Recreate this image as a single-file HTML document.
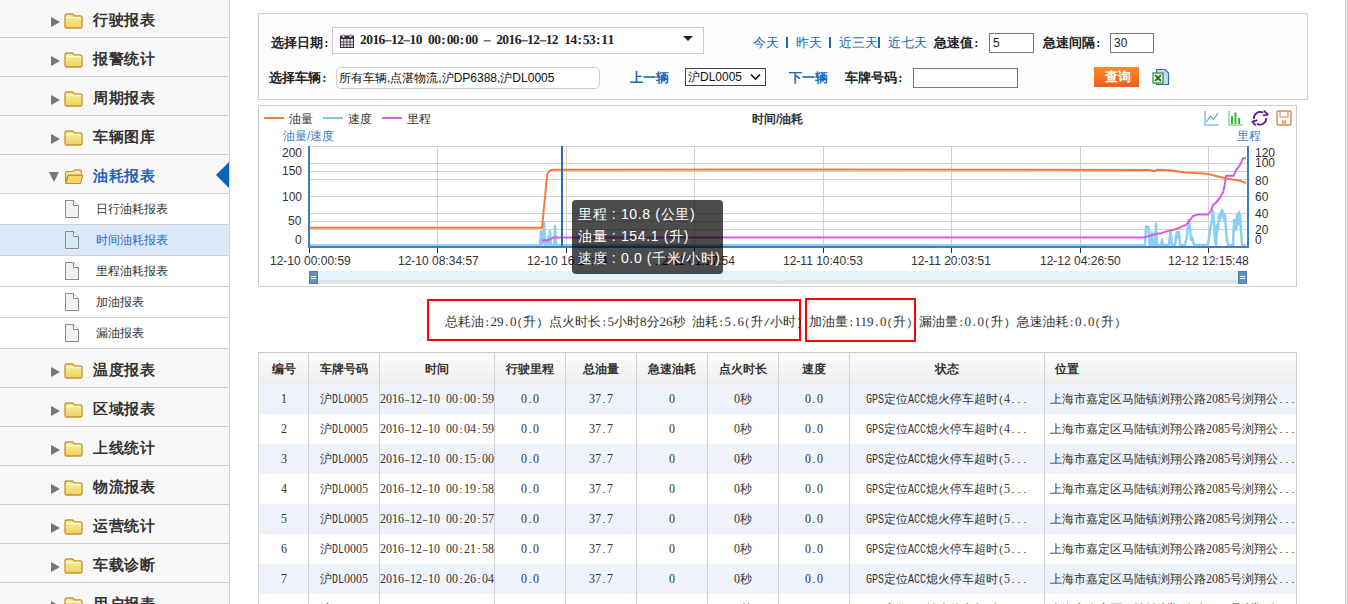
<!DOCTYPE html>
<html><head><meta charset="utf-8">
<style>
@font-face{font-family:"SM";src:local("Liberation Mono");size-adjust:83.33%;unicode-range:U+0000-002F,U+003A-00FF,U+2013;font-weight:normal;}
@font-face{font-family:"SM";src:local("Liberation Serif"),local("LiberationSerif");unicode-range:U+0030-0039;font-weight:normal;}
@font-face{font-family:"SM";src:local("Liberation Mono Bold"),local("LiberationMono-Bold");size-adjust:83.33%;unicode-range:U+0000-002F,U+003A-00FF;font-weight:bold;}
@font-face{font-family:"SM";src:local("Liberation Serif Bold"),local("LiberationSerif-Bold");unicode-range:U+0030-0039;font-weight:bold;}
html,body{margin:0;padding:0;}
body{width:1348px;height:604px;overflow:hidden;background:#fff;position:relative;font-family:"Liberation Sans",sans-serif;color:#333;}
.a{position:absolute;white-space:nowrap;}
.sm{font-family:"SM","Liberation Sans",sans-serif;}
/* sidebar */
#sb{position:absolute;left:0;top:0;width:229px;height:604px;background:#f8f8f8;border-right:1px solid #d4d4d4;overflow:hidden;}
.mr{position:absolute;left:0;width:229px;height:38px;border-bottom:1px solid #cecece;}
.mr .tri{position:absolute;left:51px;top:18px;width:0;height:0;border-top:5px solid transparent;border-bottom:5px solid transparent;border-left:9.5px solid #767676;}
.mr .fd{position:absolute;left:64px;top:14px;}
.mr .tx{position:absolute;left:93px;top:11px;letter-spacing:0.5px;font-size:15px;font-weight:bold;color:#333;line-height:20px;}
.sr{position:absolute;left:0;width:229px;height:30px;border-bottom:1px solid #cecece;background:#fff;}
.sr .dc{position:absolute;left:64px;top:5px;}
.sr .tx{position:absolute;left:96px;top:7px;font-size:12px;color:#333;line-height:17px;}
.mr .trd{position:absolute;left:49px;top:17px;width:0;height:0;border-left:5.5px solid transparent;border-right:5.5px solid transparent;border-top:10px solid #767676;}
.sel{position:absolute;left:216px;top:7px;width:0;height:0;border-top:13px solid transparent;border-bottom:13px solid transparent;border-right:13px solid #0b62b8;}

#tp{position:absolute;left:258px;top:13px;width:1048px;height:85px;border:1px solid #cdcdcd;background:#fdfdfd;}
.lb{font-size:13px;font-weight:bold;color:#222;line-height:16px;font-family:"SM","Liberation Sans",sans-serif;}
.lk{font-size:13px;color:#1a68b8;line-height:16px;}
.bx{position:absolute;background:#fff;box-sizing:border-box;}

#cp{position:absolute;left:258px;top:105px;width:1037px;height:180px;border:1px solid #cdcdcd;background:#fff;}
.ct{font-size:12px;color:#333;line-height:15px;}
.tt{font-size:14px;color:#fff;line-height:22px;letter-spacing:0.65px;}

.sum{font-size:13px;color:#333;line-height:16px;text-rendering:geometricPrecision;}
#tb{position:absolute;left:258px;top:352px;border-collapse:collapse;table-layout:fixed;font-size:12px;color:#333;}
#tb td,#tb th{padding:0;white-space:nowrap;overflow:hidden;text-align:center;border-left:1px solid #d2d2d2;border-right:1px solid #d2d2d2;}
#tb th{height:31px;font-weight:bold;background:linear-gradient(#fdfdfd,#ececec);border-top:1px solid #cfcfcf;line-height:16px;}
#tb td{height:30px;line-height:16px;padding-top:3px;box-sizing:border-box;}
#tb tr.o td{background:#eef3fb;}
#tb tr.e td{background:#fff;}
.dt{font-family:"Liberation Serif",serif;font-weight:bold;font-size:13.5px;color:#222;line-height:16px;text-rendering:geometricPrecision;}
.dt i{font-style:normal;display:inline-block;width:6.2px;text-align:center;}
.uc{display:inline-block;font-weight:normal;overflow:visible;vertical-align:baseline;}
.uc b{display:inline-block;font-weight:normal;font-family:"Liberation Mono",monospace;font-size:12.5px;transform:scaleX(0.8);transform-origin:0 0;}
</style></head><body>
<svg width="0" height="0" style="position:absolute"><defs><linearGradient id="fg" x1="0" y1="0" x2="0" y2="1"><stop offset="0" stop-color="#f6eea0"/><stop offset="0.45" stop-color="#f3e583"/><stop offset="1" stop-color="#f4cf5e"/></linearGradient><linearGradient id="fg2" x1="0" y1="0" x2="0" y2="1"><stop offset="0" stop-color="#f6ee9a"/><stop offset="1" stop-color="#f2cf5a"/></linearGradient></defs></svg>
<div id="sb">
<div class="mr" style="top:-1px"><span class="tri"></span><svg class="fd" width="19" height="16" viewBox="0 0 19 16"><path d="M1 3.2 Q1 1 3 1 L8.5 1 L10.3 2.8 L16 2.8 Q18 2.8 18 4.8 L18 13.5 Q18 15 16.5 15 L2.5 15 Q1 15 1 13.5 Z" fill="url(#fg)" stroke="#c79331" stroke-width="1.3"/><path d="M2.2 4.6 H16.8" stroke="#fffbe0" stroke-width="1.2"/></svg><span class="tx">行驶报表</span></div>
<div class="mr" style="top:38px"><span class="tri"></span><svg class="fd" width="19" height="16" viewBox="0 0 19 16"><path d="M1 3.2 Q1 1 3 1 L8.5 1 L10.3 2.8 L16 2.8 Q18 2.8 18 4.8 L18 13.5 Q18 15 16.5 15 L2.5 15 Q1 15 1 13.5 Z" fill="url(#fg)" stroke="#c79331" stroke-width="1.3"/><path d="M2.2 4.6 H16.8" stroke="#fffbe0" stroke-width="1.2"/></svg><span class="tx">报警统计</span></div>
<div class="mr" style="top:77px"><span class="tri"></span><svg class="fd" width="19" height="16" viewBox="0 0 19 16"><path d="M1 3.2 Q1 1 3 1 L8.5 1 L10.3 2.8 L16 2.8 Q18 2.8 18 4.8 L18 13.5 Q18 15 16.5 15 L2.5 15 Q1 15 1 13.5 Z" fill="url(#fg)" stroke="#c79331" stroke-width="1.3"/><path d="M2.2 4.6 H16.8" stroke="#fffbe0" stroke-width="1.2"/></svg><span class="tx">周期报表</span></div>
<div class="mr" style="top:116px"><span class="tri"></span><svg class="fd" width="19" height="16" viewBox="0 0 19 16"><path d="M1 3.2 Q1 1 3 1 L8.5 1 L10.3 2.8 L16 2.8 Q18 2.8 18 4.8 L18 13.5 Q18 15 16.5 15 L2.5 15 Q1 15 1 13.5 Z" fill="url(#fg)" stroke="#c79331" stroke-width="1.3"/><path d="M2.2 4.6 H16.8" stroke="#fffbe0" stroke-width="1.2"/></svg><span class="tx">车辆图库</span></div>
<div class="mr" style="top:155px"><span class="trd"></span><svg class="fd" style="top:14px" width="20" height="16" viewBox="0 0 20 16"><path d="M1.5 4 Q1.5 2.5 3 2.5 L9 2.5 L11 0.8 L16 0.8 L17.5 2.5 L17.5 6 L4 6 L1.5 13.5 Z" fill="#f3e7a8" stroke="#c9962c" stroke-width="1.2"/><path d="M4 6.5 L18.8 6.5 L16.5 14.5 L1.8 14.5 Z" fill="#f5d86a" stroke="#c9962c" stroke-width="1.2"/></svg><span class="tx" style="color:#1f64b4">油耗报表</span><span class="sel"></span></div>
<div class="sr" style="top:194px;"><svg class="dc" width="16" height="20" viewBox="0 0 16 20"><path d="M1.5 1.5 L9.5 1.5 L14.5 6.5 L14.5 18.5 L1.5 18.5 Z" fill="#f2f2f2" stroke="#8a8a8a" stroke-width="1"/><path d="M9.5 1.5 L9.5 6.5 L14.5 6.5" fill="#fff" stroke="#8a8a8a" stroke-width="1"/></svg><span class="tx">日行油耗报表</span></div>
<div class="sr" style="top:225px;background:#dae8f7;"><svg class="dc" width="16" height="20" viewBox="0 0 16 20"><path d="M1.5 1.5 L9.5 1.5 L14.5 6.5 L14.5 18.5 L1.5 18.5 Z" fill="#d6e8fb" stroke="#8a8a8a" stroke-width="1"/><path d="M9.5 1.5 L9.5 6.5 L14.5 6.5" fill="#fff" stroke="#8a8a8a" stroke-width="1"/></svg><span class="tx" style="color:#2e6cc0">时间油耗报表</span></div>
<div class="sr" style="top:256px;"><svg class="dc" width="16" height="20" viewBox="0 0 16 20"><path d="M1.5 1.5 L9.5 1.5 L14.5 6.5 L14.5 18.5 L1.5 18.5 Z" fill="#f2f2f2" stroke="#8a8a8a" stroke-width="1"/><path d="M9.5 1.5 L9.5 6.5 L14.5 6.5" fill="#fff" stroke="#8a8a8a" stroke-width="1"/></svg><span class="tx">里程油耗报表</span></div>
<div class="sr" style="top:287px;"><svg class="dc" width="16" height="20" viewBox="0 0 16 20"><path d="M1.5 1.5 L9.5 1.5 L14.5 6.5 L14.5 18.5 L1.5 18.5 Z" fill="#f2f2f2" stroke="#8a8a8a" stroke-width="1"/><path d="M9.5 1.5 L9.5 6.5 L14.5 6.5" fill="#fff" stroke="#8a8a8a" stroke-width="1"/></svg><span class="tx">加油报表</span></div>
<div class="sr" style="top:318px;"><svg class="dc" width="16" height="20" viewBox="0 0 16 20"><path d="M1.5 1.5 L9.5 1.5 L14.5 6.5 L14.5 18.5 L1.5 18.5 Z" fill="#f2f2f2" stroke="#8a8a8a" stroke-width="1"/><path d="M9.5 1.5 L9.5 6.5 L14.5 6.5" fill="#fff" stroke="#8a8a8a" stroke-width="1"/></svg><span class="tx">漏油报表</span></div>
<div class="mr" style="top:349px"><span class="tri"></span><svg class="fd" width="19" height="16" viewBox="0 0 19 16"><path d="M1 3.2 Q1 1 3 1 L8.5 1 L10.3 2.8 L16 2.8 Q18 2.8 18 4.8 L18 13.5 Q18 15 16.5 15 L2.5 15 Q1 15 1 13.5 Z" fill="url(#fg)" stroke="#c79331" stroke-width="1.3"/><path d="M2.2 4.6 H16.8" stroke="#fffbe0" stroke-width="1.2"/></svg><span class="tx">温度报表</span></div>
<div class="mr" style="top:388px"><span class="tri"></span><svg class="fd" width="19" height="16" viewBox="0 0 19 16"><path d="M1 3.2 Q1 1 3 1 L8.5 1 L10.3 2.8 L16 2.8 Q18 2.8 18 4.8 L18 13.5 Q18 15 16.5 15 L2.5 15 Q1 15 1 13.5 Z" fill="url(#fg)" stroke="#c79331" stroke-width="1.3"/><path d="M2.2 4.6 H16.8" stroke="#fffbe0" stroke-width="1.2"/></svg><span class="tx">区域报表</span></div>
<div class="mr" style="top:427px"><span class="tri"></span><svg class="fd" width="19" height="16" viewBox="0 0 19 16"><path d="M1 3.2 Q1 1 3 1 L8.5 1 L10.3 2.8 L16 2.8 Q18 2.8 18 4.8 L18 13.5 Q18 15 16.5 15 L2.5 15 Q1 15 1 13.5 Z" fill="url(#fg)" stroke="#c79331" stroke-width="1.3"/><path d="M2.2 4.6 H16.8" stroke="#fffbe0" stroke-width="1.2"/></svg><span class="tx">上线统计</span></div>
<div class="mr" style="top:466px"><span class="tri"></span><svg class="fd" width="19" height="16" viewBox="0 0 19 16"><path d="M1 3.2 Q1 1 3 1 L8.5 1 L10.3 2.8 L16 2.8 Q18 2.8 18 4.8 L18 13.5 Q18 15 16.5 15 L2.5 15 Q1 15 1 13.5 Z" fill="url(#fg)" stroke="#c79331" stroke-width="1.3"/><path d="M2.2 4.6 H16.8" stroke="#fffbe0" stroke-width="1.2"/></svg><span class="tx">物流报表</span></div>
<div class="mr" style="top:505px"><span class="tri"></span><svg class="fd" width="19" height="16" viewBox="0 0 19 16"><path d="M1 3.2 Q1 1 3 1 L8.5 1 L10.3 2.8 L16 2.8 Q18 2.8 18 4.8 L18 13.5 Q18 15 16.5 15 L2.5 15 Q1 15 1 13.5 Z" fill="url(#fg)" stroke="#c79331" stroke-width="1.3"/><path d="M2.2 4.6 H16.8" stroke="#fffbe0" stroke-width="1.2"/></svg><span class="tx">运营统计</span></div>
<div class="mr" style="top:544px"><span class="tri"></span><svg class="fd" width="19" height="16" viewBox="0 0 19 16"><path d="M1 3.2 Q1 1 3 1 L8.5 1 L10.3 2.8 L16 2.8 Q18 2.8 18 4.8 L18 13.5 Q18 15 16.5 15 L2.5 15 Q1 15 1 13.5 Z" fill="url(#fg)" stroke="#c79331" stroke-width="1.3"/><path d="M2.2 4.6 H16.8" stroke="#fffbe0" stroke-width="1.2"/></svg><span class="tx">车载诊断</span></div>
<div class="mr" style="top:583px"><span class="tri"></span><svg class="fd" width="19" height="16" viewBox="0 0 19 16"><path d="M1 3.2 Q1 1 3 1 L8.5 1 L10.3 2.8 L16 2.8 Q18 2.8 18 4.8 L18 13.5 Q18 15 16.5 15 L2.5 15 Q1 15 1 13.5 Z" fill="url(#fg)" stroke="#c79331" stroke-width="1.3"/><path d="M2.2 4.6 H16.8" stroke="#fffbe0" stroke-width="1.2"/></svg><span class="tx">用户报表</span></div>
</div>

<div id="tp"></div>
<span class="a lb" style="left:271px;top:36px">选择日期:</span>
<div class="bx" style="left:332px;top:27px;width:372px;height:27px;border:1px solid #c9c9c9"></div>
<svg class="a" style="left:340px;top:34px" width="14" height="14" viewBox="0 0 14 14"><rect x="0.5" y="2" width="13" height="11.5" fill="#e8e4f8" stroke="#3a3030" stroke-width="1"/><rect x="0.5" y="2" width="13" height="3" fill="#3a3030"/><path d="M0.5 8H13.5M0.5 10.8H13.5M3.7 5V13.5M6.9 5V13.5M10.1 5V13.5" stroke="#3a3030" stroke-width="0.8"/><circle cx="3.5" cy="2.3" r="1.4" fill="#fff" stroke="#3a3030" stroke-width="0.7"/><circle cx="10.5" cy="2.3" r="1.4" fill="#fff" stroke="#3a3030" stroke-width="0.7"/></svg>
<span class="a dt" style="left:360px;top:32px"><i>2</i><i>0</i><i>1</i><i>6</i><i>–</i><i>1</i><i>2</i><i>–</i><i>1</i><i>0</i><i>&nbsp;</i><i>0</i><i>0</i><i>:</i><i>0</i><i>0</i><i>:</i><i>0</i><i>0</i><i>&nbsp;</i><i>–</i><i>&nbsp;</i><i>2</i><i>0</i><i>1</i><i>6</i><i>–</i><i>1</i><i>2</i><i>–</i><i>1</i><i>2</i><i>&nbsp;</i><i>1</i><i>4</i><i>:</i><i>5</i><i>3</i><i>:</i><i>1</i><i>1</i></span>
<span class="a" style="left:683px;top:36px;width:0;height:0;border-left:5px solid transparent;border-right:5px solid transparent;border-top:5px solid #222"></span>
<span class="a lk" style="left:753px;top:35px">今天</span>
<span class="a" style="left:786px;top:37px;width:1.5px;height:11px;background:#1a68b8"></span>
<span class="a lk" style="left:796px;top:35px">昨天</span>
<span class="a" style="left:829px;top:37px;width:1.5px;height:11px;background:#1a68b8"></span>
<span class="a lk" style="left:839px;top:35px">近三天</span>
<span class="a" style="left:878px;top:37px;width:1.5px;height:11px;background:#1a68b8"></span>
<span class="a lk" style="left:888px;top:35px">近七天</span>
<span class="a lb" style="left:934px;top:36px">急速值:</span>
<div class="bx" style="left:989px;top:33px;width:45px;height:20px;border:1px solid #777"></div>
<span class="a" style="left:993px;top:35px;font-size:12px;color:#222;line-height:16px">5</span>
<span class="a lb" style="left:1043px;top:36px">急速间隔:</span>
<div class="bx" style="left:1110px;top:33px;width:44px;height:20px;border:1px solid #777"></div>
<span class="a" style="left:1114px;top:35px;font-size:12px;color:#222;line-height:16px">30</span>

<span class="a lb" style="left:269px;top:71px">选择车辆:</span>
<div class="bx" style="left:336px;top:67px;width:264px;height:22px;border:1px solid #ccc;border-radius:5px"></div>
<span class="a" style="left:339px;top:70px;font-size:12px;color:#111;line-height:16px">所有车辆,点湛物流,沪DP6388,沪DL0005</span>
<span class="a lk" style="left:630px;top:70px;font-weight:bold">上一辆</span>
<div class="bx" style="left:685px;top:68px;width:81px;height:18px;border:1px solid #444"></div>
<span class="a" style="left:688px;top:69px;font-size:12px;color:#111;line-height:16px">沪DL0005</span>
<svg class="a" style="left:750px;top:73px" width="11" height="8" viewBox="0 0 11 8"><path d="M1 1.5 L5.5 6 L10 1.5" fill="none" stroke="#111" stroke-width="1.6"/></svg>
<span class="a lk" style="left:789px;top:70px;font-weight:bold">下一辆</span>
<span class="a lb" style="left:845px;top:71px">车牌号码:</span>
<div class="bx" style="left:913px;top:68px;width:105px;height:20px;border:1px solid #777"></div>
<div class="a" style="left:1094px;top:67px;width:45px;height:20px;background:linear-gradient(#f68d25,#ed5d24);"></div>
<span class="a" style="left:1105px;top:69px;font-size:13px;font-weight:bold;color:#fff;line-height:16px">查询</span>
<svg class="a" style="left:1152px;top:68px" width="19" height="18" viewBox="0 0 19 18"><path d="M4.5 1.5 L13 1.5 L16.5 5 L16.5 16.5 L4.5 16.5 Z" fill="#c9dcf4" stroke="#3d63b0" stroke-width="1.2"/><rect x="1" y="5" width="10" height="10" fill="#fff" stroke="#2d8a2d" stroke-width="1.2"/><path d="M3 7 L9 13 M9 7 L3 13" stroke="#1f7a1f" stroke-width="2"/></svg>
<div id="cp"></div>
<svg class="a" style="left:0;top:0" width="1348" height="604" viewBox="0 0 1348 604">
<path d="M309 146.5H1247" stroke="#d2d2d2" stroke-width="1"/>
<path d="M309 163.5H1247" stroke="#d2d2d2" stroke-width="1"/>
<path d="M309 171.5H1247" stroke="#d2d2d2" stroke-width="1"/>
<path d="M309 179.5H1247" stroke="#d2d2d2" stroke-width="1"/>
<path d="M309 196.5H1247" stroke="#d2d2d2" stroke-width="1"/>
<path d="M309 213.5H1247" stroke="#d2d2d2" stroke-width="1"/>
<path d="M309 221.5H1247" stroke="#d2d2d2" stroke-width="1"/>
<path d="M309 229.5H1247" stroke="#d2d2d2" stroke-width="1"/>
<path d="M437.5 146V246" stroke="#d0d0d0" stroke-width="1"/>
<path d="M566.5 146V246" stroke="#d0d0d0" stroke-width="1"/>
<path d="M694.5 146V246" stroke="#d0d0d0" stroke-width="1"/>
<path d="M823.5 146V246" stroke="#d0d0d0" stroke-width="1"/>
<path d="M951.5 146V246" stroke="#d0d0d0" stroke-width="1"/>
<path d="M1080.5 146V246" stroke="#d0d0d0" stroke-width="1"/>
<path d="M1208.5 146V246" stroke="#d0d0d0" stroke-width="1"/>
<path d="M309.5 248V253" stroke="#333" stroke-width="1"/>
<path d="M437.5 248V253" stroke="#333" stroke-width="1"/>
<path d="M566.5 248V253" stroke="#333" stroke-width="1"/>
<path d="M694.5 248V253" stroke="#333" stroke-width="1"/>
<path d="M823.5 248V253" stroke="#333" stroke-width="1"/>
<path d="M951.5 248V253" stroke="#333" stroke-width="1"/>
<path d="M1080.5 248V253" stroke="#333" stroke-width="1"/>
<path d="M1208.5 248V253" stroke="#333" stroke-width="1"/>
<path d="M264 118H284" stroke="#f4793f" stroke-width="2"/>
<path d="M323 118H343" stroke="#7fc6f2" stroke-width="2"/>
<path d="M382 118H402" stroke="#d45fd8" stroke-width="2"/>
<polyline points="309,245.5 540,245.5 541,231.5 542,245 543,240 544,223 545,245 547,245 548,237 549,245 550,231 551,245 554,245 555,226 556,245 1145,245.5 1146,226.5 1148.5,227 1149.5,245 1151,245 1152,232.3 1153,245 1155,245 1156,223.7 1157,245 1161,245 1162,239.6 1163,245 1169,245 1170.5,231 1172,245 1175,245 1176,236 1177,232.3 1178,238 1179,232.3 1180,245 1185,245 1187,236 1188.5,220 1190,227 1191,240 1192,237 1194,245 1208,245 1210,230 1212,220 1213,211 1214,222 1215,240 1216,245 1217,225 1218,230 1219,215 1220,220 1221,212 1222,210 1223,213 1224,220 1225,215 1226,230 1227,240 1228,245 1233,245 1234,220 1235,222 1236,230 1237,215 1238,225 1239,212 1240,215 1241,230 1242,245 1246,245.5" fill="none" stroke="#8ccdf5" stroke-width="2.5" stroke-linejoin="round"/>
<polyline points="542,240.5 549,240 553,237.6 1144,237.4 1150,235.6 1155,234.2 1162,232.9 1170,230.4 1175,229.4 1180,227.5 1185,225.2 1188,223 1190,220 1193,216 1198,214.4 1208,214.4 1210.7,211.3 1213.2,204.6 1215.7,203 1219.8,198 1223.1,192.2 1224.8,184.8 1226.1,175.7 1233.9,175.7 1235.6,170.7 1239.7,165.7 1243,158.3 1246,158.3" fill="none" stroke="#d75cdb" stroke-width="2" stroke-linejoin="round"/>
<polyline points="309,227.7 542,227.7 547.3,174 550,170.5 553.3,169.7 800,169.5 1150,170 1153.5,171.2 1158,169.8 1170,170.3 1185,172.4 1203,173.5 1208,174 1225,178.2 1240,180.7 1246,183.2" fill="none" stroke="#f5793f" stroke-width="2" stroke-linejoin="round"/>
<path d="M309 146V248" stroke="#3d80c0" stroke-width="2"/>
<path d="M1248 146V248" stroke="#3d80c0" stroke-width="2"/>
<path d="M308 247H1249" stroke="#3d80c0" stroke-width="2"/>
<path d="M562 146V246" stroke="#2c6cae" stroke-width="2"/>
<rect x="309" y="271" width="938" height="9" fill="#e8f1fa"/><rect x="309" y="280" width="938" height="4" fill="#dbe5ef"/><path d="M775.5 276.5h1M778.5 276.5h1M781.5 276.5h1M775.5 280.5h1M778.5 280.5h1M781.5 280.5h1" stroke="#fff" stroke-width="1.2"/>
<rect x="309.5" y="271.5" width="8" height="12" fill="#5f90c3" stroke="#4a7db3" stroke-width="1"/>
<path d="M311 276.5H316M311 278.5H316" stroke="#fff" stroke-width="1"/>
<rect x="1238.5" y="271.5" width="8" height="12" fill="#5f90c3" stroke="#4a7db3" stroke-width="1"/>
<path d="M1240 276.5H1245M1240 278.5H1245" stroke="#fff" stroke-width="1"/>
<path d="M1205 111V125H1219" fill="none" stroke="#8cc3f5" stroke-width="1.6"/><path d="M1206.5 122L1210.5 116L1213.5 119.5L1218 113" fill="none" stroke="#5aa8ef" stroke-width="1.2"/>
<path d="M1229 111V125H1243" fill="none" stroke="#8fdc8f" stroke-width="1.6"/><path d="M1232 116V124M1235.5 112.5V124M1239 118V124" stroke="#1fb51f" stroke-width="1.8"/>
<path d="M1253.8 118.2A6.4 6.4 0 0 1 1262.5 112.4M1266.3 118.8A6.4 6.4 0 0 1 1257.6 124.2" fill="none" stroke="#5a1596" stroke-width="1.8" stroke-linecap="round"/><path d="M1264.4 111.2L1267.8 114.6L1263.4 115.4M1256.6 120.4L1252.3 121.6L1255.2 124.8" fill="none" stroke="#5a1596" stroke-width="1.8" stroke-linecap="round" stroke-linejoin="round"/>
<rect x="1277" y="111" width="14" height="14" rx="1.5" fill="none" stroke="#dd8547" stroke-width="1.4"/><path d="M1280 111V117H1288V111M1282.5 121H1285.5V123H1282.5Z" fill="none" stroke="#dd8547" stroke-width="1.1"/>
</svg>
<span class="a ct" style="left:289px;top:112px">油量</span>
<span class="a ct" style="left:348px;top:112px">速度</span>
<span class="a ct" style="left:407px;top:112px">里程</span>
<span class="a ct" style="left:752px;top:112px;font-weight:bold">时间/油耗</span>
<span class="a ct" style="left:283px;top:129px;color:#3b7dbd">油量/速度</span>
<span class="a ct" style="left:1237px;top:129px;color:#3b7dbd">里程</span>
<span class="a ct" style="left:282px;top:146px">200</span>
<span class="a ct" style="left:282px;top:164px">150</span>
<span class="a ct" style="left:282px;top:190px">100</span>
<span class="a ct" style="left:288px;top:214px">50</span>
<span class="a ct" style="left:295px;top:233px">0</span>
<span class="a ct" style="left:1255px;top:146px">120</span>
<span class="a ct" style="left:1255px;top:156px">100</span>
<span class="a ct" style="left:1255px;top:174px">80</span>
<span class="a ct" style="left:1255px;top:190px">60</span>
<span class="a ct" style="left:1255px;top:207px">40</span>
<span class="a ct" style="left:1255px;top:223px">20</span>
<span class="a ct" style="left:1255px;top:233px">0</span>
<span class="a ct" style="left:270px;top:254px">12-10 00:00:59</span>
<span class="a ct" style="left:398px;top:254px">12-10 08:34:57</span>
<span class="a ct" style="left:527px;top:254px">12-10 16:17:54</span>
<span class="a ct" style="left:655px;top:254px">12-11 01:17:54</span>
<span class="a ct" style="left:783px;top:254px">12-11 10:40:53</span>
<span class="a ct" style="left:911px;top:254px">12-11 20:03:51</span>
<span class="a ct" style="left:1040px;top:254px">12-12 04:26:50</span>
<span class="a ct" style="left:1168px;top:254px">12-12 12:15:48</span>
<div class="a" style="left:572px;top:200px;width:151px;height:74px;background:rgba(0,0,0,0.7);border-radius:4px"></div>
<span class="a tt" style="left:578px;top:203px">里程 : 10.8 (公里)</span>
<span class="a tt" style="left:578px;top:225px">油量 : 154.1 (升)</span>
<span class="a tt" style="left:578px;top:247px">速度 : 0.0 (千米/小时)</span>

<div class="a" style="left:427px;top:299px;width:370px;height:38px;border:2px solid #f00"></div>
<div class="a" style="left:805px;top:298px;width:107px;height:40px;border:2px solid #f00"></div>
<span class="a sum sm" style="left:445px;top:316px">总耗油:29.0(升) 点火时长:5小时8分26秒 油耗:5.6(升/小时)</span>
<span class="a sum sm" style="left:809px;top:316px">加油量:119.0(升)</span>
<span class="a sum sm" style="left:919px;top:316px">漏油量:0.0(升) 急速油耗:0.0(升)</span>
<table id="tb"><colgroup><col style="width:50px"><col style="width:71px"><col style="width:115px"><col style="width:71px"><col style="width:71px"><col style="width:71px"><col style="width:71px"><col style="width:71px"><col style="width:195px"><col style="width:252px"></colgroup>
<tr><th>编号</th><th>车牌号码</th><th>时间</th><th>行驶里程</th><th>总油量</th><th>急速油耗</th><th>点火时长</th><th>速度</th><th>状态</th><th style="text-align:left;padding-left:10px">位置</th></tr>
<tr class="o"><td class="sm">1</td><td class="sm">沪<b class="uc" style="width:12px"><b>DL</b></b>0005</td><td class="sm">2016–12–10 00:00:59</td><td class="sm">0.0</td><td class="sm">37.7</td><td class="sm">0</td><td class="sm">0秒</td><td class="sm">0.0</td><td class="sm"><b class="uc" style="width:18px"><b>GPS</b></b>定位<b class="uc" style="width:18px"><b>ACC</b></b>熄火停车超时(4...</td><td class="sm" style="text-align:left;padding-left:5px">上海市嘉定区马陆镇浏翔公路2085号浏翔公...</td></tr>
<tr class="e"><td class="sm">2</td><td class="sm">沪<b class="uc" style="width:12px"><b>DL</b></b>0005</td><td class="sm">2016–12–10 00:04:59</td><td class="sm">0.0</td><td class="sm">37.7</td><td class="sm">0</td><td class="sm">0秒</td><td class="sm">0.0</td><td class="sm"><b class="uc" style="width:18px"><b>GPS</b></b>定位<b class="uc" style="width:18px"><b>ACC</b></b>熄火停车超时(4...</td><td class="sm" style="text-align:left;padding-left:5px">上海市嘉定区马陆镇浏翔公路2085号浏翔公...</td></tr>
<tr class="o"><td class="sm">3</td><td class="sm">沪<b class="uc" style="width:12px"><b>DL</b></b>0005</td><td class="sm">2016–12–10 00:15:00</td><td class="sm">0.0</td><td class="sm">37.7</td><td class="sm">0</td><td class="sm">0秒</td><td class="sm">0.0</td><td class="sm"><b class="uc" style="width:18px"><b>GPS</b></b>定位<b class="uc" style="width:18px"><b>ACC</b></b>熄火停车超时(5...</td><td class="sm" style="text-align:left;padding-left:5px">上海市嘉定区马陆镇浏翔公路2085号浏翔公...</td></tr>
<tr class="e"><td class="sm">4</td><td class="sm">沪<b class="uc" style="width:12px"><b>DL</b></b>0005</td><td class="sm">2016–12–10 00:19:58</td><td class="sm">0.0</td><td class="sm">37.7</td><td class="sm">0</td><td class="sm">0秒</td><td class="sm">0.0</td><td class="sm"><b class="uc" style="width:18px"><b>GPS</b></b>定位<b class="uc" style="width:18px"><b>ACC</b></b>熄火停车超时(5...</td><td class="sm" style="text-align:left;padding-left:5px">上海市嘉定区马陆镇浏翔公路2085号浏翔公...</td></tr>
<tr class="o"><td class="sm">5</td><td class="sm">沪<b class="uc" style="width:12px"><b>DL</b></b>0005</td><td class="sm">2016–12–10 00:20:57</td><td class="sm">0.0</td><td class="sm">37.7</td><td class="sm">0</td><td class="sm">0秒</td><td class="sm">0.0</td><td class="sm"><b class="uc" style="width:18px"><b>GPS</b></b>定位<b class="uc" style="width:18px"><b>ACC</b></b>熄火停车超时(5...</td><td class="sm" style="text-align:left;padding-left:5px">上海市嘉定区马陆镇浏翔公路2085号浏翔公...</td></tr>
<tr class="e"><td class="sm">6</td><td class="sm">沪<b class="uc" style="width:12px"><b>DL</b></b>0005</td><td class="sm">2016–12–10 00:21:58</td><td class="sm">0.0</td><td class="sm">37.7</td><td class="sm">0</td><td class="sm">0秒</td><td class="sm">0.0</td><td class="sm"><b class="uc" style="width:18px"><b>GPS</b></b>定位<b class="uc" style="width:18px"><b>ACC</b></b>熄火停车超时(5...</td><td class="sm" style="text-align:left;padding-left:5px">上海市嘉定区马陆镇浏翔公路2085号浏翔公...</td></tr>
<tr class="o"><td class="sm">7</td><td class="sm">沪<b class="uc" style="width:12px"><b>DL</b></b>0005</td><td class="sm">2016–12–10 00:26:04</td><td class="sm">0.0</td><td class="sm">37.7</td><td class="sm">0</td><td class="sm">0秒</td><td class="sm">0.0</td><td class="sm"><b class="uc" style="width:18px"><b>GPS</b></b>定位<b class="uc" style="width:18px"><b>ACC</b></b>熄火停车超时(5...</td><td class="sm" style="text-align:left;padding-left:5px">上海市嘉定区马陆镇浏翔公路2085号浏翔公...</td></tr>
<tr class="e"><td class="sm">8</td><td class="sm">沪<b class="uc" style="width:12px"><b>DL</b></b>0005</td><td class="sm">2016–12–10 00:27:00</td><td class="sm">0.0</td><td class="sm">37.7</td><td class="sm">0</td><td class="sm">0秒</td><td class="sm">0.0</td><td class="sm"><b class="uc" style="width:18px"><b>GPS</b></b>定位<b class="uc" style="width:18px"><b>ACC</b></b>熄火停车超时(5...</td><td class="sm" style="text-align:left;padding-left:5px">上海市嘉定区马陆镇浏翔公路2085号浏翔公...</td></tr>
</table>
<div class="a" style="left:1345px;top:0;width:1px;height:604px;background:#cfcfcf"></div><div class="a" style="left:1346px;top:0;width:1px;height:604px;background:#ededed"></div><div class="a" style="left:1347px;top:0;width:1px;height:604px;background:#d4d4d4"></div>
</body></html>
